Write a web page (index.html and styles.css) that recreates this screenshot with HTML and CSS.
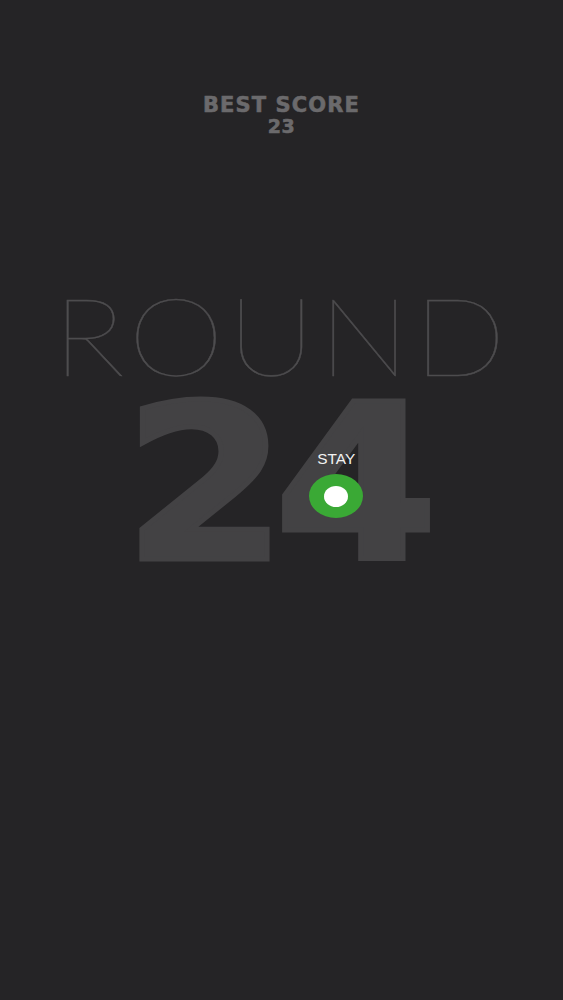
FILE: index.html
```html
<!DOCTYPE html>
<html lang="en">
<head>
    <meta charset="UTF-8">
    <meta name="viewport" content="width=device-width, initial-scale=1.0">
    <title>Round</title>
    <link rel="stylesheet" href="styles.css">
</head>
<body>

<div class="screen">
    <div class="best">
        <div class="best-label">BEST SCORE</div>
        <div class="best-value">23</div>
    </div>

    <div class="round">
        <div class="round-label">ROUND</div>
        <div class="round-number">24</div>
    </div>

    <!-- player dot -->
    <div class="player">
        <span class="player-label">STAY</span>
        <div class="player-dot"><div class="player-core"></div></div>
    </div>
</div>

</body>
</html>
```

FILE: styles.css
```css
body {
    margin: 0;
    background-color: #252426;
    font-family: "DejaVu Sans", Arial, sans-serif;
    height: 100vh;
    overflow: hidden;
}
.screen {
    position: relative;
    height: 1000px;
    display: flex;
    flex-direction: column;
    align-items: center;
}
.best {
    margin-top: 94px;
    display: flex;
    flex-direction: column;
    align-items: center;
    color: #6b6a6c;
    font-weight: bold;
    -webkit-text-stroke: 0.6px #6b6a6c;
}
.best-label {
    font-size: 21px;
    line-height: 22px;
    letter-spacing: 1.1px;
}
.best-value {
    font-size: 19px;
    line-height: 20px;
    letter-spacing: 0.5px;
}
.round {
    margin-top: 143px;
    display: flex;
    flex-direction: column;
    align-items: center;
}
.round-label {
    font-family: Lato, sans-serif;
    font-weight: 100;
    font-size: 108px;
    line-height: 110px;
    color: #4e4d4f;
    letter-spacing: 3px;
    transform: scaleX(1.13);
    -webkit-text-stroke: 0.4px #4e4d4f;
}
.round-number {
    font-family: "DejaVu Sans", sans-serif;
    font-weight: bold;
    font-size: 216px;
    line-height: 190px;
    color: #434244;
    -webkit-text-stroke: 5px #434244;
    letter-spacing: -12px;
    margin-top: 1px;
    margin-right: 14px;
    transform: scaleX(1.09);
}
.player {
    position: absolute;
    left: 309px;
    top: 451px;
    width: 54px;
    display: flex;
    flex-direction: column;
    align-items: center;
}
.player-label {
    font-family: "Liberation Sans", Arial, sans-serif;
    font-size: 14px;
    color: #f2f2f2;
    line-height: 16px;
    margin-bottom: 7px;
    transform: scaleX(1.1);
}
.player-dot {
    width: 54px;
    height: 44px;
    border-radius: 50%;
    background-color: #3aa935;
    display: flex;
    align-items: center;
    justify-content: center;
}
.player-core {
    width: 24px;
    height: 21px;
    border-radius: 50%;
    background-color: #ffffff;
}
```
